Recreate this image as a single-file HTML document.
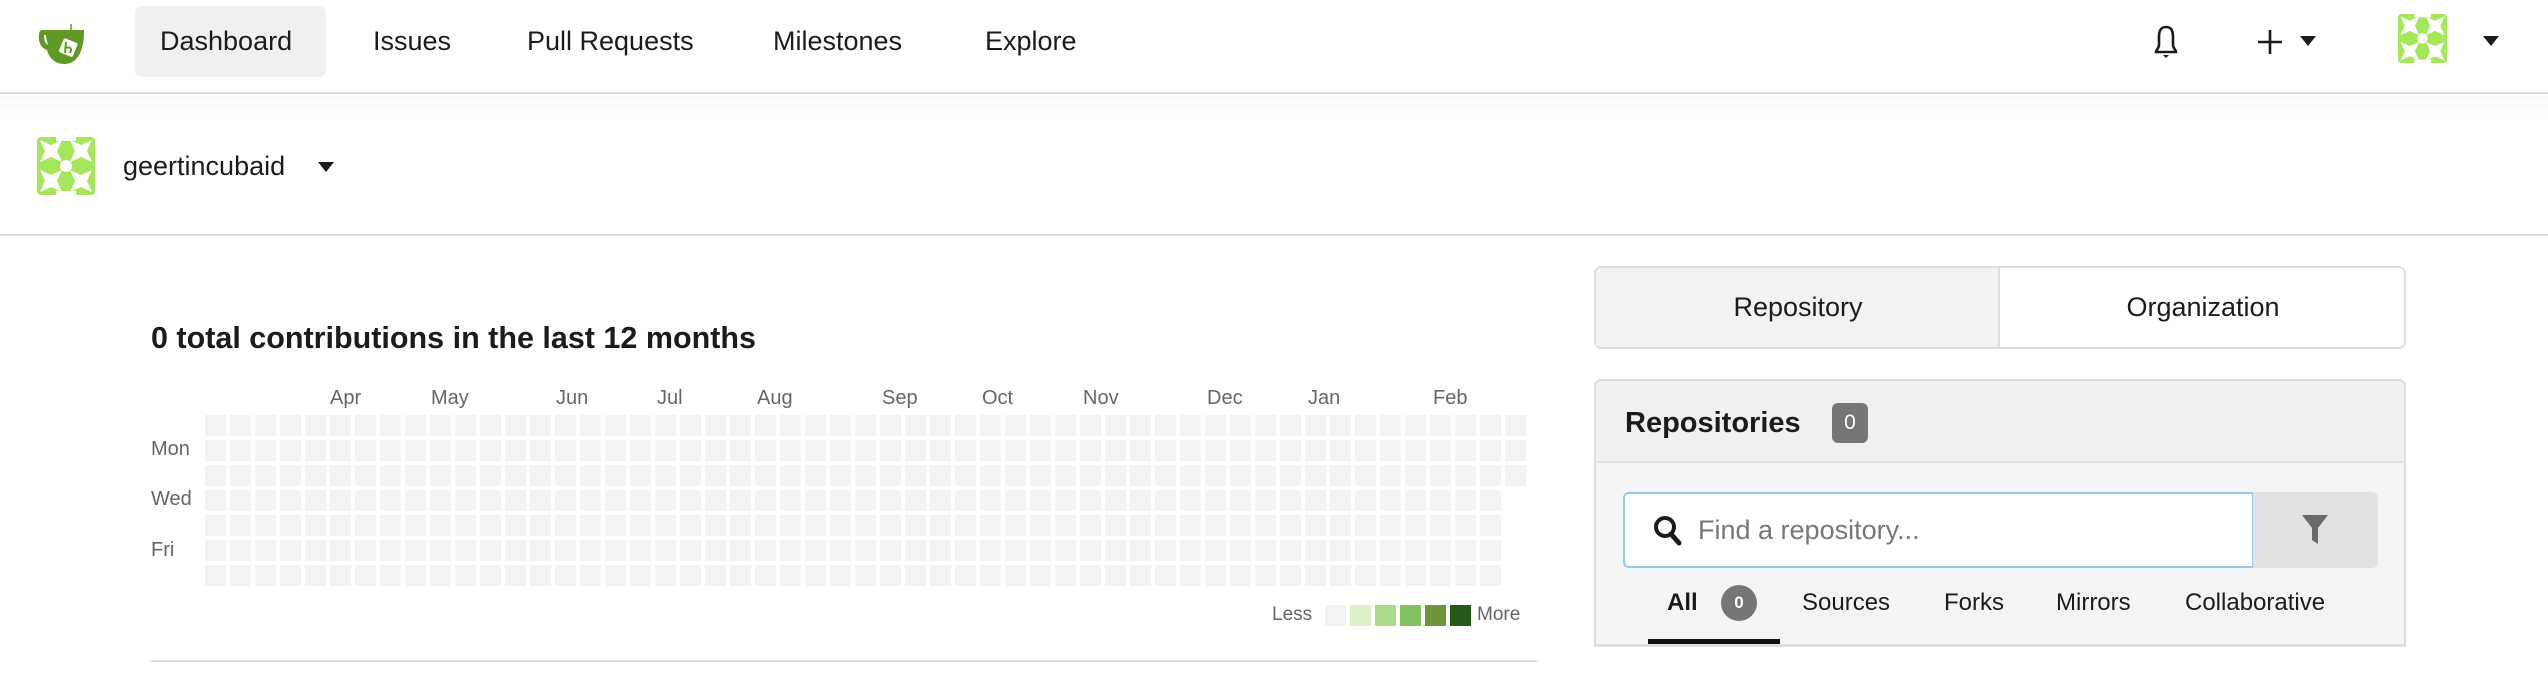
<!DOCTYPE html>
<html><head><meta charset="utf-8"><style>
*{box-sizing:border-box;margin:0;padding:0}
body{width:2548px;height:676px;background:#fff;font-family:"Liberation Sans",Arial,sans-serif;color:#181c21;position:relative;overflow:hidden}
.a{position:absolute;white-space:nowrap}
.nav{font-size:27px;line-height:32px}
</style></head><body>
<!-- nav -->
<div class="a" style="left:0;top:0;width:2548px;height:94px;border-bottom:2px solid #dedede;background:#fff"></div>
<div class="a" style="left:0;top:96px;width:2548px;height:140px;background:linear-gradient(#f8f8f8,#fff 20px);border-bottom:2px solid #dedede"></div>
<svg class="a" style="left:38px;top:20px" width="56" height="46" viewBox="0 0 56 46">
<path d="M4 10 H46 V12 C46 30 40 44 26 44 C17 44 11 38 9 30 C3 28 0 22 1 15 C1 12 2 10 4 10 Z M6 15 C6 21 8 24 10 25 C9 21 8 17 8 15 Z" fill="#609926" fill-rule="evenodd"/>
<line x1="33" y1="4" x2="33" y2="18" stroke="#609926" stroke-width="1.5"/>
<rect x="23" y="20" width="15" height="15" rx="2" transform="rotate(22 30 27)" fill="#fff"/>
<path d="M28 22 L27 33 M27 28 C30 27 33 27 33 30 L32 33" stroke="#609926" stroke-width="2" fill="none"/>
</svg>
<div class="a" style="left:135px;top:6px;width:191px;height:71px;background:#f0f0f0;border-radius:7px"></div>
<div class="a nav" style="left:160px;top:25px">Dashboard</div>
<div class="a nav" style="left:373px;top:25px">Issues</div>
<div class="a nav" style="left:527px;top:25px">Pull Requests</div>
<div class="a nav" style="left:773px;top:25px">Milestones</div>
<div class="a nav" style="left:985px;top:25px">Explore</div>
<svg class="a" style="left:2150px;top:25px" width="32" height="36" viewBox="0 0 32 36"><path d="M16 2 C10 2 9 7 9 12 V20 C9 23 6 25 6 27 H26 C26 25 23 23 23 20 V12 C23 7 22 2 16 2 Z" fill="none" stroke="#181c21" stroke-width="2.6"/><path d="M13 30 H19 L16 33 Z" fill="#181c21"/></svg>
<svg class="a" style="left:2256px;top:28px" width="28" height="28"><path d="M14 2 V26 M2 14 H26" stroke="#181c21" stroke-width="2.6"/></svg>
<div class="a" style="left:2300px;top:36px;width:0;height:0;border-left:8px solid transparent;border-right:8px solid transparent;border-top:10px solid #181c21"></div>
<svg class="a" style="left:2398px;top:14px" width="49" height="49" viewBox="0 0 58 58"><rect width="58" height="58" rx="4" fill="#a6e65a"/><g fill="#fff"><path d="M3 3 L14 8 L25 3 L20 14 L25 25 L14 20 L3 25 L8 14Z"/><path d="M33 3 L44 8 L55 3 L50 14 L55 25 L44 20 L33 25 L38 14Z"/><path d="M3 33 L14 38 L25 33 L20 44 L25 55 L14 50 L3 55 L8 44Z"/><path d="M33 33 L44 38 L55 33 L50 44 L55 55 L44 50 L33 55 L38 44Z"/><circle cx="29" cy="29" r="6"/><rect x="19" y="0" width="20" height="4"/><rect x="19" y="54" width="20" height="4"/></g></svg>
<div class="a" style="left:2483px;top:36px;width:0;height:0;border-left:8px solid transparent;border-right:8px solid transparent;border-top:10px solid #181c21"></div>
<!-- user row -->
<svg class="a" style="left:37px;top:137px" width="58" height="58" viewBox="0 0 58 58"><rect width="58" height="58" rx="4" fill="#a6e65a"/><g fill="#fff"><path d="M3 3 L14 8 L25 3 L20 14 L25 25 L14 20 L3 25 L8 14Z"/><path d="M33 3 L44 8 L55 3 L50 14 L55 25 L44 20 L33 25 L38 14Z"/><path d="M3 33 L14 38 L25 33 L20 44 L25 55 L14 50 L3 55 L8 44Z"/><path d="M33 33 L44 38 L55 33 L50 44 L55 55 L44 50 L33 55 L38 44Z"/><circle cx="29" cy="29" r="6"/><rect x="19" y="0" width="20" height="4"/><rect x="19" y="54" width="20" height="4"/></g></svg>
<div class="a" style="left:123px;top:150px;font-size:27px;line-height:32px">geertincubaid</div>
<div class="a" style="left:318px;top:162px;width:0;height:0;border-left:8px solid transparent;border-right:8px solid transparent;border-top:10px solid #181c21"></div>
<!-- contributions -->
<div class="a" style="left:151px;top:320px;font-size:30.5px;font-weight:bold;line-height:36px">0 total contributions in the last 12 months</div>
<div class="a" style="left:0;top:386px;font-size:20px;color:#666;line-height:24px;width:1600px;height:24px">
<span class="a" style="left:330px">Apr</span><span class="a" style="left:431px">May</span><span class="a" style="left:556px">Jun</span><span class="a" style="left:657px">Jul</span><span class="a" style="left:757px">Aug</span><span class="a" style="left:882px">Sep</span><span class="a" style="left:982px">Oct</span><span class="a" style="left:1083px">Nov</span><span class="a" style="left:1207px">Dec</span><span class="a" style="left:1308px">Jan</span><span class="a" style="left:1433px">Feb</span></div>
<div class="a" style="left:151px;top:438px;font-size:20px;color:#666">Mon</div>
<div class="a" style="left:151px;top:488px;font-size:20px;color:#666">Wed</div>
<div class="a" style="left:151px;top:539px;font-size:20px;color:#666">Fri</div>
<svg class="a" style="left:0;top:0" width="1560" height="676">
<defs><pattern id="p" x="205" y="415" width="25" height="25" patternUnits="userSpaceOnUse"><rect width="21" height="21" fill="#f3f3f3"/></pattern></defs>
<rect x="205" y="415" width="1300" height="175" fill="url(#p)"/>
<rect x="1505" y="415" width="21" height="21" fill="#f3f3f3"/><rect x="1505" y="440" width="21" height="21" fill="#f3f3f3"/><rect x="1505" y="465" width="21" height="21" fill="#f3f3f3"/>
<rect x="1325" y="605" width="21" height="21" fill="#f3f3f3"/><rect x="1350" y="605" width="21" height="21" fill="#dcefc8"/><rect x="1375" y="605" width="21" height="21" fill="#acd98c"/><rect x="1400" y="605" width="21" height="21" fill="#80c35f"/><rect x="1425" y="605" width="21" height="21" fill="#6d963b"/><rect x="1450" y="605" width="21" height="21" fill="#24591a"/>
<rect x="151" y="660" width="1386" height="2" fill="#dedede"/>
</svg>
<div class="a" style="left:1272px;top:604px;font-size:19px;color:#666">Less</div>
<div class="a" style="left:1477px;top:604px;font-size:19px;color:#666">More</div>
<!-- right tabs -->
<div class="a" style="left:1594px;top:266px;width:812px;height:83px;border:2px solid #dedede;border-radius:7px;overflow:hidden;background:#fff">
<div class="a" style="left:0;top:0;width:404px;height:79px;background:#f2f2f2;border-right:2px solid #dedede"></div>
<div class="a" style="left:0;top:22px;width:404px;text-align:center;font-size:27px;line-height:34px">Repository</div>
<div class="a" style="left:406px;top:22px;width:402px;text-align:center;font-size:27px;line-height:34px">Organization</div>
</div>
<div class="a" style="left:1594px;top:379px;width:812px;height:268px;border:2px solid #dedede;border-bottom:3px solid #dedede;border-radius:7px 7px 0 0;background:#f3f4f5;overflow:hidden">
<div class="a" style="left:0;top:0;width:808px;height:82px;background:#f0f0f0;border-bottom:2px solid #dedede"></div>
<div class="a" style="left:29px;top:25px;font-size:29px;font-weight:bold;line-height:34px">Repositories</div>
<div class="a" style="left:236px;top:22px;width:36px;height:40px;background:#767676;border-radius:6px;color:#fff;font-size:21px;text-align:center;line-height:40px">0</div>
<div class="a" style="left:27px;top:111px;width:631px;height:76px;background:#fff;border:2px solid #96c8ea;border-radius:6px 0 0 6px"></div>
<svg class="a" style="left:57px;top:134px" width="30" height="32" viewBox="0 0 30 32"><circle cx="12" cy="12" r="9" fill="none" stroke="#181c21" stroke-width="4"/><path d="M18 19 L26 28" stroke="#181c21" stroke-width="5" stroke-linecap="round"/></svg>
<div class="a" style="left:102px;top:132px;font-size:27px;color:#777;line-height:34px">Find a repository...</div>
<div class="a" style="left:657px;top:111px;width:125px;height:76px;background:#e0e1e2;border-radius:0 6px 6px 0"></div>
<svg class="a" style="left:705px;top:133px" width="28" height="32" viewBox="0 0 28 32"><path d="M1 1 H27 L17 14 V30 L11 26 V14 Z" fill="#6a6a6a"/></svg>
<div class="a" style="left:71px;top:207px;font-size:24px;font-weight:bold;line-height:30px">All</div>
<div class="a" style="left:125px;top:204px;width:36px;height:36px;border-radius:50%;background:#767676;color:#fff;font-size:17px;text-align:center;line-height:36px;font-weight:bold">0</div>
<div class="a" style="left:52px;top:258px;width:132px;height:5px;background:#111"></div>
<div class="a" style="left:206px;top:207px;font-size:24px;line-height:30px">Sources</div>
<div class="a" style="left:348px;top:207px;font-size:24px;line-height:30px">Forks</div>
<div class="a" style="left:460px;top:207px;font-size:24px;line-height:30px">Mirrors</div>
<div class="a" style="left:589px;top:207px;font-size:24px;line-height:30px">Collaborative</div>
</div>
</body></html>
